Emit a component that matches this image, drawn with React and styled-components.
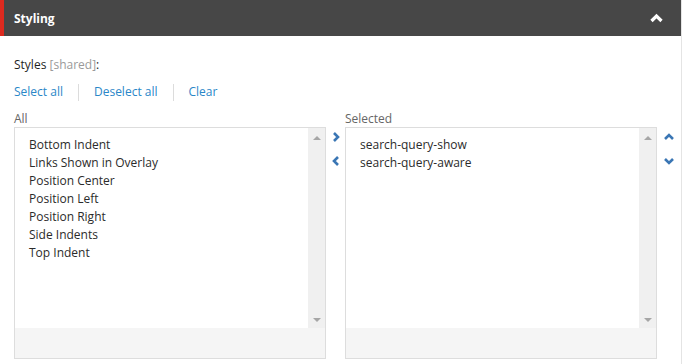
import React from 'react';
import { styled, createGlobalStyle } from 'styled-components';

const GlobalStyle = createGlobalStyle`
  html, body {
    margin: 0;
    padding: 0;
    background: #ffffff;
    font-family: "Open Sans", "Liberation Sans", sans-serif;
    font-size: 12px;
    color: #2b2b2b;
  }
`;

const allItems = [
  'Bottom Indent',
  'Links Shown in Overlay',
  'Position Center',
  'Position Left',
  'Position Right',
  'Side Indents',
  'Top Indent',
];

const selectedItems = ['search-query-show', 'search-query-aware'];

function Chevron({ dir, color = '#3a76b4', size = 12 }) {
  const points = {
    up: '2,8 6,4 10,8',
    down: '2,4 6,8 10,4',
    left: '8,2 4,6 8,10',
    right: '4,2 8,6 4,10',
  }[dir];
  return (
    <svg width={size} height={size} viewBox="0 0 12 12">
      <polyline
        points={points}
        fill="none"
        stroke={color}
        strokeWidth="2.6"
        strokeLinecap="butt"
      />
    </svg>
  );
}

function ListBox({ items }) {
  return (
    <Box>
      <ListArea>
        <Items>
          {items.map((item) => (
            <Item key={item}>{item}</Item>
          ))}
        </Items>
        <Scrollbar>
          <Tri $up />
          <Tri />
        </Scrollbar>
      </ListArea>
      <Footer />
    </Box>
  );
}

function App() {
  return (
    <Panel>
      <GlobalStyle />
      <Header>
        <Title>Styling</Title>
        <Chevron dir="up" color="#ffffff" size={15} />
      </Header>
      <Body>
        <FieldLabel>
          Styles <Shared>[shared]</Shared>:
        </FieldLabel>
        <Links>
          <Link href="#">Select all</Link>
          <Sep />
          <Link href="#">Deselect all</Link>
          <Sep />
          <Link href="#">Clear</Link>
        </Links>
        <Lists>
          <ColLabel>All</ColLabel>
          <span />
          <ColLabel>Selected</ColLabel>
          <span />
          <ListBox items={allItems} />
          <Arrows>
            <Chevron dir="right" />
            <Chevron dir="left" />
          </Arrows>
          <ListBox items={selectedItems} />
          <Arrows>
            <Chevron dir="up" />
            <Chevron dir="down" />
          </Arrows>
        </Lists>
      </Body>
    </Panel>
  );
}

const Panel = styled.div`
  width: 682px;
  height: 364px;
  box-sizing: border-box;
  border-right: 1px solid #e4e4e4;
  overflow: hidden;
`;

const Header = styled.div`
  height: 36px;
  background: #474747;
  border-left: 4px solid #dd2a1f;
  box-sizing: border-box;
  display: flex;
  align-items: center;
  justify-content: space-between;
  padding: 0 17px 0 10px;
`;

const Title = styled.div`
  color: #ffffff;
  font-weight: 700;
  font-size: 12px;
`;

const Body = styled.div`
  padding: 20px 0 0 14px;
`;

const FieldLabel = styled.div`
  line-height: 18px;
  color: #1f1f1f;
`;

const Shared = styled.span`
  color: #9a9a9a;
`;

const Links = styled.div`
  display: flex;
  align-items: center;
  height: 18px;
  margin-top: 9px;
`;

const Link = styled.a`
  color: #2a87c8;
  text-decoration: none;
  line-height: 18px;
`;

const Sep = styled.span`
  width: 1px;
  height: 17px;
  background: #dcdcdc;
  margin: 0 15px;
`;

const Lists = styled.div`
  display: grid;
  grid-template-columns: 312px 19px 312px 1fr;
  margin-top: 8px;
`;

const ColLabel = styled.div`
  color: #666666;
  line-height: 16px;
  padding-top: 2px;
`;

const Box = styled.div`
  height: 232px;
  border: 1px solid #dddddd;
  box-sizing: border-box;
  display: flex;
  flex-direction: column;
`;

const ListArea = styled.div`
  flex: 1;
  display: flex;
  background: #ffffff;
`;

const Items = styled.ul`
  flex: 1;
  list-style: none;
  margin: 0;
  padding: 8px 0 0 14px;
`;

const Item = styled.li`
  line-height: 18px;
  color: #2b2b2b;
`;

const Scrollbar = styled.div`
  width: 17px;
  background: #f0f0f0;
  display: flex;
  flex-direction: column;
  justify-content: space-between;
  align-items: center;
  padding: 8px 0 6px;
`;

const Tri = styled.span`
  width: 0;
  height: 0;
  border-left: 4px solid transparent;
  border-right: 4px solid transparent;
  ${({ $up }) =>
    $up
      ? 'border-bottom: 4px solid #a6a6a6;'
      : 'border-top: 4px solid #a6a6a6;'}
`;

const Footer = styled.div`
  height: 30px;
  background: #f5f5f5;
`;

const Arrows = styled.div`
  display: flex;
  flex-direction: column;
  align-items: center;
  gap: 12px;
  padding-top: 4px;
`;

export default App;
